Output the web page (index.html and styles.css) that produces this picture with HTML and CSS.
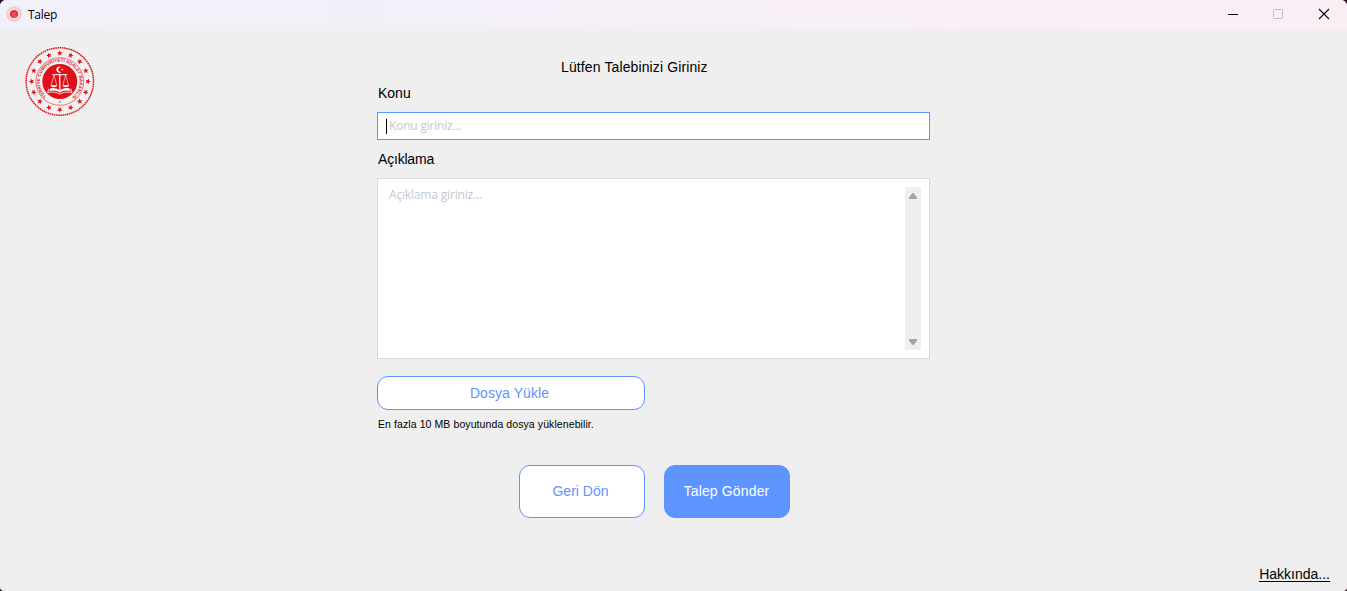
FILE: index.html
```html
<!DOCTYPE html>
<html lang="tr">
<head>
<meta charset="utf-8">
<title>Talep</title>
<link rel="stylesheet" href="styles.css">
</head>
<body>
<svg class="defs" width="0" height="0">
  <defs>
    <path id="star" d="M0-3 .75-.95 2.9-.9 1.15.4 1.8 2.5 0 1.2-1.8 2.5-1.15.4-2.9-.9-.75-.95Z"/>
    <path id="arc" d="M-13.3 14.8A19.9 19.9 0 1 1 13.3 14.8"/>
  </defs>
</svg>
<div class="window">
  <header class="titlebar">
    <svg class="app-icon" viewBox="-35 -35 70 70">
      <circle r="29" fill="#f5e6ee" stroke="#f1bcc8" stroke-width="9" stroke-dasharray="5 2"/>
      <circle r="18" fill="#e3303d"/>
      <path d="M-12 9Q-4 7 0 11 4 7 12 9M0-5V8M-8-4H8" fill="none" stroke="#ef8a94" stroke-width="2.500"/>
    </svg>
    <span class="window-title">Talep</span>
    <div class="controls">
      <svg width="11" height="11" viewBox="0 0 11 11"><path d="M0 5.5h10" stroke="#000"/></svg>
      <svg width="11" height="11" viewBox="0 0 11 11"><rect x=".5" y=".5" width="9" height="9" rx=".8" fill="none" stroke="#c9bdc5"/></svg>
      <svg width="11" height="11" viewBox="0 0 11 11"><path d="M0 0l10 10M10 0l-10 10" stroke="#111" stroke-width="1.15"/></svg>
    </div>
  </header>
  <main class="content">
    <div class="logo">
      <svg width="70" height="70" viewBox="-34.800 -34.500 70 70">
        <g fill="#e01019">
          <circle r="33.7" fill="#f2f0f0" stroke="#e01019" stroke-width="1.5" stroke-dasharray="1.6 .6"/>
          <circle r="23.8" fill="none" stroke="#e01019" stroke-width=".55"/>
          <circle r="17.5"/>
          <use href="#star" transform="translate(0 -28.2)"/>
          <use href="#star" transform="rotate(22.5) translate(0 -28.2)"/>
          <use href="#star" transform="rotate(45) translate(0 -28.2)"/>
          <use href="#star" transform="rotate(67.5) translate(0 -28.2)"/>
          <use href="#star" transform="rotate(90) translate(0 -28.2)"/>
          <use href="#star" transform="rotate(112.5) translate(0 -28.2)"/>
          <use href="#star" transform="rotate(135) translate(0 -28.2)"/>
          <use href="#star" transform="rotate(157.5) translate(0 -28.2)"/>
          <use href="#star" transform="rotate(180) translate(0 -28.2)"/>
          <use href="#star" transform="rotate(202.5) translate(0 -28.2)"/>
          <use href="#star" transform="rotate(225) translate(0 -28.2)"/>
          <use href="#star" transform="rotate(247.5) translate(0 -28.2)"/>
          <use href="#star" transform="rotate(270) translate(0 -28.2)"/>
          <use href="#star" transform="rotate(292.5) translate(0 -28.2)"/>
          <use href="#star" transform="rotate(315) translate(0 -28.2)"/>
          <use href="#star" transform="rotate(337.5) translate(0 -28.2)"/>
          <circle cy="20.5" r=".8"/>
        </g>
        <path d="M1.500-14.200A3 3 0 1 0 1.500-9.600 2.400 2.400 0 1 1 1.500-14.200Z" fill="#fff"/>
        <use href="#star" transform="translate(2.4 -12) scale(.4)" fill="#fff"/>
        <g fill="none" stroke="#fff">
          <path d="M-7.500-6.800H7.500" stroke-width="1"/>
          <path d="M-5.800-6.500-8.800 4M-5.800-6.500-3 4M5.800-6.500 3 4M5.800-6.500 8.800 4" stroke-width=".55"/>
          <path d="M0-7.500V9" stroke-width="1.200"/>
          <path d="M-11 7.200-12.200 11Q-4 9.500 0 12.800 4 9.500 12.200 11L11 7.200" stroke-width=".8"/>
        </g>
        <path d="M-9.500 3.700H-2.500Q-3.200 5.700-6 5.700T-9.500 3.700ZM2.500 3.700H9.500Q8.800 5.700 6 5.700T2.500 3.700ZM-9.500 6.700Q-3 5.800 0 9 3 5.800 9.500 6.700L10.600 9.400Q3 8.100 0 11.200-3 8.100-10.600 9.400Z" fill="#fff"/>
        <text class="seal-text" textLength="98" lengthAdjust="spacing"><textPath href="#arc">TÜRKİYE CUMHURİYETİ ADALET BAKANLIĞI</textPath></text>
      </svg>
    </div>
    <form class="form">
      <h1 class="heading">Lütfen Talebinizi Giriniz</h1>
      <label class="label">Konu</label>
      <div class="subject"><span class="caret"></span><span class="placeholder">Konu giriniz...</span></div>
      <label class="label label-description">Açıklama</label>
      <div class="description">
        <span class="placeholder placeholder-description">Açıklama giriniz...</span>
        <div class="scrollbar">
          <svg width="8" height="6" viewBox="0 0 8 6"><path d="M0 6V4.500L3.500 0H4.500L8 4.500V6Z" fill="#a3a3a3"/></svg>
          <svg width="8" height="6" viewBox="0 0 8 6"><path d="M0 0V1.500L3.500 6H4.500L8 1.500V0Z" fill="#a3a3a3"/></svg>
        </div>
      </div>
      <button class="button upload" type="button">Dosya Yükle</button>
      <p class="hint">En fazla 10 MB boyutunda dosya yüklenebilir.</p>
      <div class="actions">
        <button class="button back" type="button">Geri Dön</button>
        <button class="button send" type="button">Talep Gönder</button>
      </div>
    </form>
  </main>
  <a class="about">Hakkında...</a>
</div>
</body>
</html>
```
FILE: styles.css
```css
* { box-sizing: border-box; }
body { margin: 0; background: #26101d; font-family: "Liberation Sans", Arial, sans-serif; overflow: hidden; }
.defs { position: absolute; }
.window { position: relative; width: 1347px; height: 591px; background: #efefef; border-radius: 6px 6px 4px 4px; overflow: hidden; }
.titlebar { display: flex; align-items: center; height: 30px; padding: 0 17px 2px 6px; background: linear-gradient(90deg, #f2f0f8 0%, #f4eff8 40%, #faeef6 75%, #f9eff5 100%); }
.app-icon { width: 16px; height: 16px; }
.window-title { margin-left: 6px; padding-top: 2px; font: 12px/16px "Open Sans", sans-serif; color: #000; letter-spacing: -.25px; }
.controls { display: flex; gap: 34.5px; margin-left: auto; }
.controls svg { display: block; overflow: visible; }
.controls svg:nth-child(2) { margin-left: -.5px; margin-right: .5px; }
.content { display: grid; grid-template-columns: 377px 553px; }
.logo { padding: 17px 0 0 25px; }
.logo svg { display: block; }
.seal-text { font: bold 4.300px "Liberation Sans", Arial, sans-serif; fill: #e01019; letter-spacing: .1px; }
.form { display: flex; flex-direction: column; padding-top: 28px; }
.heading { margin: 0; padding-left: 184px; font-size: 14px; line-height: 18px; font-weight: 400; letter-spacing: .12px; }
.label { margin-top: 8px; padding-left: 1px; font-size: 14px; line-height: 18px; }
.label-description { margin-top: 10px; letter-spacing: -.2px; }
.subject { display: flex; align-items: center; height: 28px; margin-top: 10px; padding-left: 8px; border: 1px solid #5e94ff; background: #fff; }
.caret { width: 1px; height: 15px; margin-right: 2px; background: #000; }
.placeholder { font: 12px/16px "Open Sans", sans-serif; color: #c2c8cf; letter-spacing: -.2px; }
.placeholder-description { letter-spacing: -.17px; }
.description { display: flex; justify-content: space-between; height: 181px; margin-top: 10px; padding: 8px 8px 8px 11px; border: 1px solid #d5dadf; background: #fff; }
.scrollbar { display: flex; flex-direction: column; align-items: center; justify-content: space-between; width: 16px; height: 163px; padding: 6px 0 5px; background: #efefef; }
.button { display: flex; align-items: center; justify-content: center; padding: 0; border: 1px solid #5e94ff; border-radius: 11px; background: #fff; color: #5e94ff; font: 14px/18px "Liberation Sans", Arial, sans-serif; }
.upload { width: 268px; height: 34px; margin-top: 17px; padding-right: 3px; letter-spacing: .08px; }
.hint { margin: 8px 0 0; padding-left: 1px; font-size: 10.500px; line-height: 12px; letter-spacing: .09px; }
.actions { display: flex; gap: 19px; margin: 35px 0 0 142px; }
.back, .send { width: 126px; height: 53px; padding-bottom: 2px; }
.back { padding-right: 3px; }
.send { padding-right: 1px; background: #5e94ff; color: #fff; letter-spacing: .15px; }
.about { position: absolute; right: 17px; bottom: 9px; font-size: 14px; line-height: 13px; border-bottom: 1px solid #000; color: #000; }
```
